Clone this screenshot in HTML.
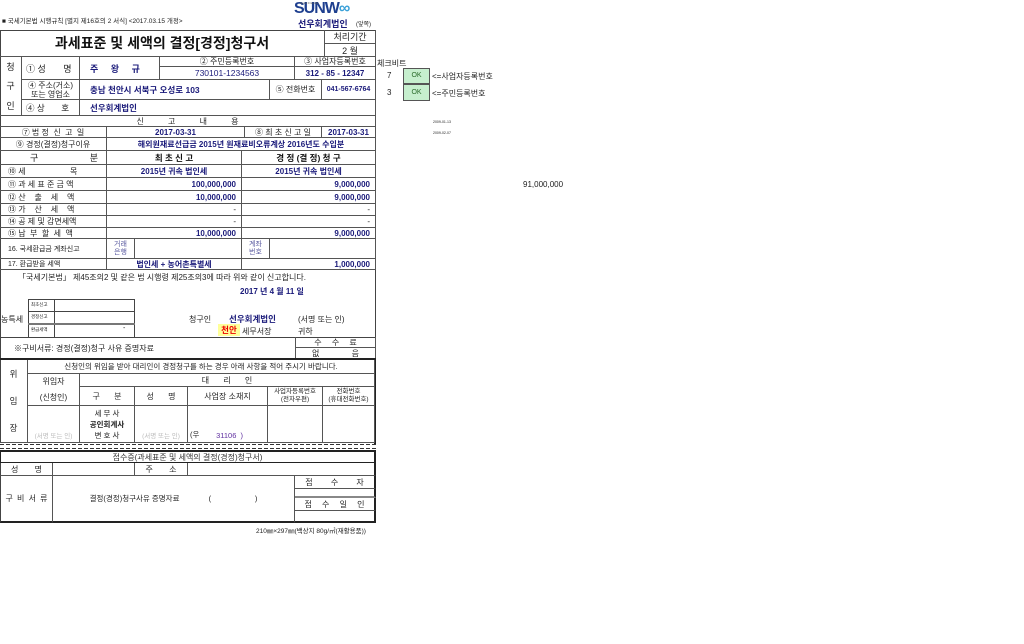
<!DOCTYPE html>
<html><head><meta charset="utf-8"><style>
body{margin:0;width:1024px;height:644px;background:#fff;position:relative;overflow:hidden;font-family:"Liberation Sans","Noto Sans CJK KR","NanumGothic",sans-serif;color:#222}
.c{position:absolute;box-sizing:border-box;border-right:1px solid #555;border-bottom:1px solid #555;display:flex;align-items:center;justify-content:center;font-size:8px;white-space:nowrap;overflow:hidden}
.l{justify-content:flex-start;padding-left:4px}
.r{justify-content:flex-end;padding-right:5px}
.b{color:#1a1a7a;font-weight:bold}
.t{position:absolute;font-size:8px;white-space:nowrap}
.ln{position:absolute;background:#444}
</style></head><body>
<!-- header -->
<div class="t" style="left:2px;top:15px;font-size:6.5px">■ 국세기본법 시행규칙 [별지 제16호의 2 서식] &lt;2017.03.15 개정&gt;</div>
<div class="t" style="left:294px;top:0px;font-size:16px;font-weight:bold;color:#1e3f8f;letter-spacing:-1px">SUNW<span style="color:#3aa0d8">∞</span></div>
<div class="t" style="left:300px;top:1px;font-size:3px;color:#555">Good Friends</div>
<div class="t" style="left:298px;top:17px;font-size:9px;font-weight:bold;color:#1a1a7a">선우회계법인</div>
<div class="t" style="left:356px;top:19px;font-size:6px">(앞쪽)</div>
<!-- outer -->
<div class="ln" style="left:0;top:30px;width:376px;height:1px"></div>
<div class="ln" style="left:0;top:30px;width:1px;height:413px"></div>
<div class="c" style="left:0;top:30px;width:325px;height:27px;font-size:14px;font-weight:bold;color:#111">과세표준 및 세액의 결정[경정]청구서</div>
<div class="c" style="left:325px;top:30px;width:51px;height:14px;font-size:9px">처리기간</div>
<div class="c" style="left:325px;top:44px;width:51px;height:13px;font-size:9px">2 월</div>
<div class="c" style="left:0;top:57px;width:22px;height:59px;flex-direction:column;justify-content:space-around;font-size:9px"><span>청</span><span>구</span><span>인</span></div>
<div class="c l" style="left:22px;top:57px;width:58px;height:23px;font-size:9px">① 성 &nbsp;&nbsp;&nbsp;&nbsp;&nbsp;&nbsp;명</div>
<div class="c l b" style="left:80px;top:57px;width:80px;height:23px;font-size:9px;padding-left:10px">주 &nbsp;&nbsp;&nbsp;&nbsp;왕 &nbsp;&nbsp;&nbsp;&nbsp;규</div>
<div class="c" style="left:160px;top:57px;width:135px;height:10px;font-size:8px">② 주민등록번호</div>
<div class="c b" style="left:160px;top:67px;width:135px;height:13px;font-size:8.5px;font-weight:normal;color:#1a1a7a">730101-1234563</div>
<div class="c" style="left:295px;top:57px;width:81px;height:10px;font-size:8px">③ 사업자등록번호</div>
<div class="c b" style="left:295px;top:67px;width:81px;height:13px;font-size:8px">312 - 85 - 12347</div>
<div class="c" style="left:22px;top:80px;width:58px;height:20px;font-size:8px;flex-direction:column;line-height:9px"><span>④ 주소(거소)</span><span>또는 영업소</span></div>
<div class="c l b" style="left:80px;top:80px;width:190px;height:20px;font-size:8.5px;padding-left:10px">충남 천안시 서북구 오성로 103</div>
<div class="c" style="left:270px;top:80px;width:52px;height:20px;font-size:8px">⑤ 전화번호</div>
<div class="c b" style="left:322px;top:80px;width:54px;height:20px;font-size:7px">041-567-6764</div>
<div class="c l" style="left:22px;top:100px;width:58px;height:16px;font-size:8.5px">④ 상 &nbsp;&nbsp;&nbsp;&nbsp;&nbsp;&nbsp;호</div>
<div class="c l b" style="left:80px;top:100px;width:296px;height:16px;font-size:8.5px;padding-left:10px">선우회계법인</div>
<div class="c" style="left:0;top:116px;width:376px;height:11px;font-size:8px;word-spacing:22px">신 고 내 용</div>
<div class="c" style="left:0;top:127px;width:107px;height:11px;font-size:8px">⑦ 법 정 &nbsp;신 &nbsp;고 &nbsp;일</div>
<div class="c b" style="left:107px;top:127px;width:138px;height:11px;font-size:8px">2017-03-31</div>
<div class="c" style="left:245px;top:127px;width:77px;height:11px;font-size:8px">⑧ 최 초 신 고 일</div>
<div class="c b" style="left:322px;top:127px;width:54px;height:11px;font-size:8px">2017-03-31</div>
<div class="c" style="left:0;top:138px;width:107px;height:13px;font-size:8px">⑨ 경정(결정)청구이유</div>
<div class="c b" style="left:107px;top:138px;width:269px;height:13px;font-size:8px">해외원재료선급금 2015년 원재료비오류계상 2016년도 수입분</div>
<div class="c" style="left:0;top:151px;width:107px;height:14px;font-size:9px;justify-content:space-between;padding:0 8px 0 30px"><span>구</span><span>분</span></div>
<div class="c b" style="left:107px;top:151px;width:135px;height:14px;font-size:8.5px;color:#111">최 초 신 고</div>
<div class="c b" style="left:242px;top:151px;width:134px;height:14px;font-size:8.5px;color:#111">경 정 (결 정) 청 구</div>
<div class="c l" style="left:0;top:165px;width:107px;height:13px;font-size:8px;padding-left:8px">⑩ 세 &nbsp;&nbsp;&nbsp;&nbsp;&nbsp;&nbsp;&nbsp;&nbsp;&nbsp;&nbsp;&nbsp;&nbsp;&nbsp;&nbsp;&nbsp;&nbsp;&nbsp;&nbsp;&nbsp;목</div>
<div class="c b" style="left:107px;top:165px;width:135px;height:13px">2015년 귀속 법인세</div>
<div class="c b" style="left:242px;top:165px;width:134px;height:13px">2015년 귀속 법인세</div>
<div class="c l" style="left:0;top:178px;width:107px;height:13px;font-size:8px;padding-left:8px">⑪ 과 세 표 준 금 액</div>
<div class="c r b" style="left:107px;top:178px;width:135px;height:13px">100,000,000</div>
<div class="c r b" style="left:242px;top:178px;width:134px;height:13px">9,000,000</div>
<div class="c l" style="left:0;top:191px;width:107px;height:13px;font-size:8px;padding-left:8px">⑫ 산 &nbsp;&nbsp;&nbsp;출 &nbsp;&nbsp;&nbsp;세 &nbsp;&nbsp;&nbsp;액</div>
<div class="c r b" style="left:107px;top:191px;width:135px;height:13px">10,000,000</div>
<div class="c r b" style="left:242px;top:191px;width:134px;height:13px">9,000,000</div>
<div class="c l" style="left:0;top:204px;width:107px;height:12px;font-size:8px;padding-left:8px">⑬ 가 &nbsp;&nbsp;&nbsp;산 &nbsp;&nbsp;&nbsp;세 &nbsp;&nbsp;&nbsp;액</div>
<div class="c r" style="left:107px;top:204px;width:135px;height:12px">-</div>
<div class="c r" style="left:242px;top:204px;width:134px;height:12px">-</div>
<div class="c l" style="left:0;top:216px;width:107px;height:12px;font-size:8px;padding-left:8px">⑭ 공 제 및 감면세액</div>
<div class="c r" style="left:107px;top:216px;width:135px;height:12px">-</div>
<div class="c r" style="left:242px;top:216px;width:134px;height:12px">-</div>
<div class="c l" style="left:0;top:228px;width:107px;height:11px;font-size:8px;padding-left:8px">⑮ 납 &nbsp;부 &nbsp;할 &nbsp;세 &nbsp;액</div>
<div class="c r b" style="left:107px;top:228px;width:135px;height:11px">10,000,000</div>
<div class="c r b" style="left:242px;top:228px;width:134px;height:11px">9,000,000</div>
<div class="c l" style="left:0;top:239px;width:107px;height:20px;font-size:7px;padding-left:8px">16. 국세환급금 계좌신고</div>
<div class="c" style="left:107px;top:239px;width:28px;height:20px;font-size:7px;color:#5a5aa0;flex-direction:column;line-height:8px"><span>거래</span><span>은행</span></div>
<div class="c" style="left:135px;top:239px;width:107px;height:20px"></div>
<div class="c" style="left:242px;top:239px;width:28px;height:20px;font-size:7px;color:#5a5aa0;flex-direction:column;line-height:8px"><span>계좌</span><span>번호</span></div>
<div class="c" style="left:270px;top:239px;width:106px;height:20px"></div>
<div class="c l" style="left:0;top:259px;width:107px;height:11px;font-size:7px;padding-left:8px">17. 환급받을 세액</div>
<div class="c b" style="left:107px;top:259px;width:135px;height:11px">법인세 + 농어촌특별세</div>
<div class="c r b" style="left:242px;top:259px;width:134px;height:11px">1,000,000</div>
<div class="ln" style="left:375px;top:270px;width:1px;height:90px"></div>
<div class="t" style="left:18px;top:272px;font-size:8px">「국세기본법」 제45조의2 및 같은 법 시행령 제25조의3에 따라 위와 같이 신고합니다.</div>
<div class="t b" style="left:240px;top:286px;font-size:8px">2017 년 4 월 11 일</div>
<div class="t" style="left:1px;top:314px;font-size:8px">농특세</div>
<div class="ln" style="left:28px;top:299px;width:107px;height:1px"></div>
<div class="ln" style="left:28px;top:299px;width:1px;height:38px"></div>
<div class="ln" style="left:54px;top:299px;width:1px;height:38px"></div>
<div class="ln" style="left:134px;top:299px;width:1px;height:38px"></div>
<div class="ln" style="left:28px;top:311px;width:107px;height:1px"></div>
<div class="ln" style="left:28px;top:323px;width:107px;height:2px;background:#777"></div>
<div class="t" style="left:31px;top:302px;font-size:4.5px">최초신고</div>
<div class="t" style="left:31px;top:314px;font-size:4.5px">경정신고</div>
<div class="t" style="left:31px;top:327px;font-size:4.5px">환급세액</div>
<div class="t" style="left:123px;top:325px;font-size:7px">-</div>
<div class="t" style="left:189px;top:314px;font-size:8px">청구인</div>
<div class="t b" style="left:229px;top:313px;font-size:8.5px">선우회계법인</div>
<div class="t" style="left:298px;top:314px;font-size:8px">(서명 또는 인)</div>
<div class="t" style="left:218px;top:324px;width:22px;height:12px;background:#ffff99;color:#e00;font-weight:bold;font-size:8.5px;text-align:center;line-height:12px">천안</div>
<div class="t" style="left:242px;top:326px;font-size:8px">세무서장</div>
<div class="t" style="left:298px;top:326px;font-size:8px">귀하</div>
<div class="ln" style="left:0;top:337px;width:376px;height:1px"></div>
<div class="t" style="left:14px;top:343px;font-size:8px">※구비서류: 경정(결정)청구 사유 증명자료</div>
<div class="c" style="left:295px;top:337px;width:81px;height:11px;border-left:1px solid #555;word-spacing:8px">수 수 료</div>
<div class="c" style="left:295px;top:348px;width:81px;height:11px;border-left:1px solid #555;word-spacing:30px">없 음</div>
<!-- 위임장 -->
<div class="ln" style="left:0;top:358px;width:376px;height:2px;background:#222"></div>
<div class="ln" style="left:374px;top:358px;width:2px;height:86px;background:#222"></div>
<div class="c" style="left:0;top:360px;width:28px;height:83px;flex-direction:column;justify-content:space-around;font-size:8.5px"><span>위</span><span>임</span><span>장</span></div>
<div class="c" style="left:28px;top:360px;width:347px;height:14px;font-size:7.5px">신청인의 위임을 받아 대리인이 경정청구를 하는 경우 아래 사항을 적어 주시기 바랍니다.</div>
<div class="c" style="left:28px;top:374px;width:52px;height:32px;flex-direction:column;justify-content:space-around;font-size:8px"><span>위임자</span><span>(신청인)</span></div>
<div class="c" style="left:80px;top:374px;width:295px;height:13px;word-spacing:12px">대 리 인</div>
<div class="c" style="left:80px;top:387px;width:55px;height:19px;word-spacing:12px">구 분</div>
<div class="c" style="left:135px;top:387px;width:53px;height:19px;word-spacing:12px">성 명</div>
<div class="c" style="left:188px;top:387px;width:80px;height:19px">사업장 소재지</div>
<div class="c" style="left:268px;top:387px;width:55px;height:19px;font-size:6.5px;flex-direction:column;line-height:8px"><span>사업자등록번호</span><span>(전자우편)</span></div>
<div class="c" style="left:323px;top:387px;width:52px;height:19px;font-size:6.5px;flex-direction:column;line-height:8px"><span>전화번호</span><span>(휴대전화번호)</span></div>
<div class="c" style="left:28px;top:406px;width:52px;height:37px;align-items:flex-end;color:#bbb;font-size:6.5px;padding-bottom:2px">(서명 또는 인)</div>
<div class="c" style="left:80px;top:406px;width:55px;height:37px;flex-direction:column;font-size:7.5px;line-height:11px"><span>세 무 사</span><b>공인회계사</b><span>변 호 사</span></div>
<div class="c" style="left:135px;top:406px;width:53px;height:37px;align-items:flex-end;color:#bbb;font-size:6.5px;padding-bottom:2px">(서명 또는 인)</div>
<div class="c l" style="left:188px;top:406px;width:80px;height:37px;align-items:flex-end;padding-bottom:2px;padding-left:2px;font-size:7.5px">(우 &nbsp;&nbsp;&nbsp;&nbsp;&nbsp;&nbsp;&nbsp;<span style="color:#6030a0">31106 &nbsp;)</span></div>
<div class="c" style="left:268px;top:406px;width:55px;height:37px"></div>
<div class="c" style="left:323px;top:406px;width:52px;height:37px"></div>
<div class="ln" style="left:0;top:444px;width:376px;height:1px;background:repeating-linear-gradient(90deg,#333 0 4px,transparent 4px 6px)"></div>
<div class="ln" style="left:0;top:448px;width:376px;height:1px;background:repeating-linear-gradient(90deg,#333 0 4px,transparent 4px 6px)"></div>
<!-- receipt -->
<div class="c" style="left:0;top:450px;width:376px;height:13px;border:1px solid #222;border-width:2px 2px 1px 1px;font-size:8px;color:#333">접수증(과세표준 및 세액의 결정(경정)청구서)</div>
<div class="c" style="left:0;top:463px;width:53px;height:13px;border-left:1px solid #444;word-spacing:14px">성 명</div>
<div class="c" style="left:53px;top:463px;width:82px;height:13px"></div>
<div class="c" style="left:135px;top:463px;width:53px;height:13px;word-spacing:14px">주 소</div>
<div class="c" style="left:188px;top:463px;width:188px;height:13px;border-right:2px solid #222"></div>
<div class="c" style="left:0;top:476px;width:53px;height:47px;border-left:1px solid #444;border-bottom:2px solid #222;word-spacing:2px">구 비 서 류</div>
<div class="c" style="left:53px;top:476px;width:242px;height:47px;border-bottom:2px solid #222;font-size:7.5px">결정(경정)청구사유 증명자료 &nbsp;&nbsp;&nbsp;&nbsp;&nbsp;&nbsp;&nbsp;&nbsp;&nbsp;&nbsp;&nbsp;&nbsp;&nbsp;( &nbsp;&nbsp;&nbsp;&nbsp;&nbsp;&nbsp;&nbsp;&nbsp;&nbsp;&nbsp;&nbsp;&nbsp;&nbsp;&nbsp;&nbsp;&nbsp;&nbsp;&nbsp;&nbsp;&nbsp;)</div>
<div class="c" style="left:295px;top:476px;width:81px;height:13px;border-right:2px solid #222;word-spacing:16px">접 수 자</div>
<div class="c" style="left:295px;top:489px;width:81px;height:9px;border-right:2px solid #222;border-bottom:2px solid #888"></div>
<div class="c" style="left:295px;top:498px;width:81px;height:13px;border-right:2px solid #222;word-spacing:8px">접 수 일 인</div>
<div class="c" style="left:295px;top:511px;width:81px;height:12px;border-right:2px solid #222;border-bottom:2px solid #222"></div>
<div class="t" style="left:256px;top:525px;font-size:6.5px">210㎜×297㎜(백상지 80g/㎡(재활용품))</div>
<!-- right side -->
<div class="t" style="left:377px;top:58px;font-size:8px">체크비트</div>
<div class="t" style="left:387px;top:71px;font-size:8px">7</div>
<div class="t" style="left:387px;top:88px;font-size:8px">3</div>
<div class="t" style="left:403px;top:68px;width:27px;height:16px;background:#c6efce;border:1px solid #555;box-sizing:border-box;color:#2a6b2a;text-align:center;line-height:14px;font-size:7px">OK</div>
<div class="t" style="left:403px;top:84px;width:27px;height:17px;background:#c6efce;border:1px solid #555;box-sizing:border-box;color:#2a6b2a;text-align:center;line-height:15px;font-size:7px">OK</div>
<div class="t" style="left:432px;top:71px;font-size:8px">&lt;=사업자등록번호</div>
<div class="t" style="left:432px;top:88px;font-size:8px">&lt;=주민등록번호</div>
<div class="t" style="left:433px;top:120px;font-size:3.5px">2009-01-13</div>
<div class="t" style="left:433px;top:131px;font-size:3.5px">2009-02-07</div>
<div class="t" style="left:523px;top:180px;font-size:8px">91,000,000</div>
</body></html>
